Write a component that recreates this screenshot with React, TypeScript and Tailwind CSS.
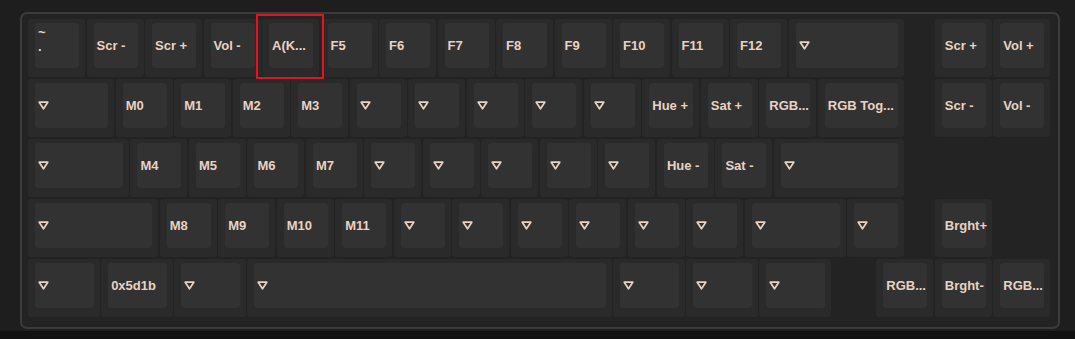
import React from 'react'

type K = { l?: string; u?: number; gap?: boolean; sel?: boolean }

const U = 58.5

const rows: K[][] = [
  [
    { l: '~\n.' }, { l: 'Scr -' }, { l: 'Scr +' }, { l: 'Vol -' }, { l: 'A(K...', sel: true },
    { l: 'F5' }, { l: 'F6' }, { l: 'F7' }, { l: 'F8' }, { l: 'F9' }, { l: 'F10' }, { l: 'F11' }, { l: 'F12' },
    { u: 2 }, { gap: true, u: 0.5 }, { l: 'Scr +' }, { l: 'Vol +' },
  ],
  [
    { u: 1.5 }, { l: 'M0' }, { l: 'M1' }, { l: 'M2' }, { l: 'M3' }, {}, {}, {}, {}, {},
    { l: 'Hue +' }, { l: 'Sat +' }, { l: 'RGB...' }, { l: 'RGB Tog...', u: 1.5 },
    { gap: true, u: 0.5 }, { l: 'Scr -' }, { l: 'Vol -' },
  ],
  [
    { u: 1.75 }, { l: 'M4' }, { l: 'M5' }, { l: 'M6' }, { l: 'M7' }, {}, {}, {}, {}, {},
    { l: 'Hue -' }, { l: 'Sat -' }, { u: 2.25 },
  ],
  [
    { u: 2.25 }, { l: 'M8' }, { l: 'M9' }, { l: 'M10' }, { l: 'M11' }, {}, {}, {}, {}, {}, {},
    { u: 1.75 }, {}, { gap: true, u: 0.5 }, { l: 'Brght+' },
  ],
  [
    { u: 1.25 }, { l: '0x5d1b', u: 1.25 }, { u: 1.25 }, { u: 6.25 }, { u: 1.25 }, { u: 1.25 }, { u: 1.25 },
    { gap: true, u: 0.75 }, { l: 'RGB...' }, { l: 'Brght-' }, { l: 'RGB...' },
  ],
]

function Tri() {
  return (
    <svg width="11" height="9" viewBox="0 0 11 9" className="block">
      <polygon points="1.2,1.2 9.8,1.2 5.5,7.8" fill="none" stroke="#e8d2c4" strokeWidth="1.7" strokeLinejoin="round" />
    </svg>
  )
}

function Key({ k }: { k: K }) {
  const w = (k.u ?? 1) * U
  if (k.gap) return <div className="shrink-0" style={{ width: w }} />
  const multi = k.l?.includes('\n')
  return (
    <div className="relative shrink-0 h-[60px]" style={{ width: w }}>
      <div className="h-[58px] mr-[1.5px] rounded-[3px] bg-[#2a2a2a] pl-[7px] pr-[6px] pt-[3.5px] pb-[9px]">
        <div
          className={
            'h-full rounded-[3px] bg-[#333233] pl-[3px] flex text-[13px] font-bold text-[#e8d2c4] whitespace-pre ' +
            (multi ? 'flex-col pt-[3px] leading-[14px]' : 'items-center leading-none')
          }
        >
          {k.l ? k.l : <Tri />}
        </div>
      </div>
      {k.sel && <div className="absolute z-10 left-[-6px] top-[-5px] w-[68px] h-[65px] border-2 border-[#e3141b]" />}
    </div>
  )
}

export default function App() {
  return (
    <div className="w-[1075px] h-[339px] bg-[#121212] font-['Liberation_Sans',Arial,sans-serif]">
      <div className="h-[331px] bg-[#1e1e1e] pt-[12px] pl-[20px]">
        <div className="w-[1040px] h-[317px] rounded-[7px] border-2 border-[#3b3b3b] bg-[#232323] pl-[6px] pt-[5px]">
          {rows.map((r, i) => (
            <div key={i} className="flex h-[60px]">
              {r.map((k, j) => (
                <Key key={j} k={k} />
              ))}
            </div>
          ))}
        </div>
      </div>
    </div>
  )
}
